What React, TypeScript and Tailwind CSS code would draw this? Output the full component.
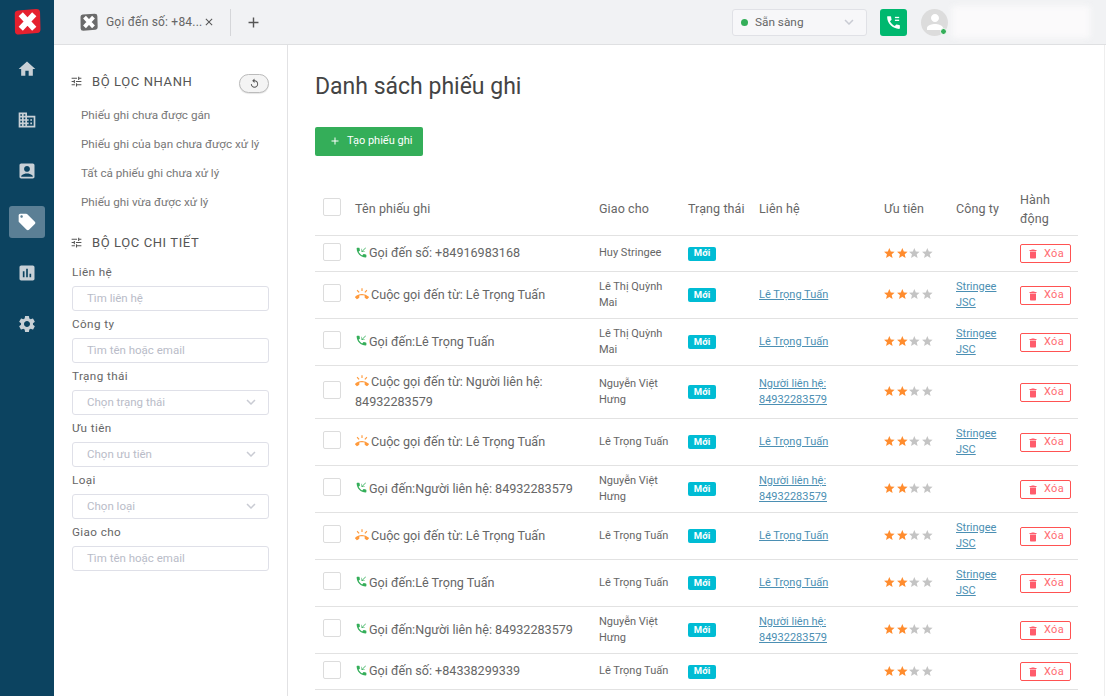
import React from "react";
import {
  MdHome,
  MdBusiness,
  MdAccountBox,
  MdLocalOffer,
  MdAssessment,
  MdSettings,
  MdTune,
  MdReplay,
  MdDelete,
  MdStar,
  MdPhoneCallback,
  MdRingVolume,
  MdPerson,
  MdClose,
  MdAdd,
  MdKeyboardArrowDown,
} from "react-icons/md";

type Row = {
  kind: "in" | "ring";
  title: string;
  owner: string;
  contact?: string;
  company?: boolean;
  h: string;
};

const rows: Row[] = [
  { kind: "in", title: "Gọi đến số: +84916983168", owner: "Huy Stringee", h: "h-[36px]" },
  { kind: "ring", title: "Cuộc gọi đến từ: Lê Trọng Tuấn", owner: "Lê Thị Quỳnh Mai", contact: "Lê Trọng Tuấn", company: true, h: "h-[47px]" },
  { kind: "in", title: "Gọi đến:Lê Trọng Tuấn", owner: "Lê Thị Quỳnh Mai", contact: "Lê Trọng Tuấn", company: true, h: "h-[47px]" },
  { kind: "ring", title: "Cuộc gọi đến từ: Người liên hệ: 84932283579", owner: "Nguyễn Việt Hưng", contact: "Người liên hệ: 84932283579", h: "h-[53px]" },
  { kind: "ring", title: "Cuộc gọi đến từ: Lê Trọng Tuấn", owner: "Lê Trọng Tuấn", contact: "Lê Trọng Tuấn", company: true, h: "h-[47px]" },
  { kind: "in", title: "Gọi đến:Người liên hệ: 84932283579", owner: "Nguyễn Việt Hưng", contact: "Người liên hệ: 84932283579", h: "h-[47px]" },
  { kind: "ring", title: "Cuộc gọi đến từ: Lê Trọng Tuấn", owner: "Lê Trọng Tuấn", contact: "Lê Trọng Tuấn", company: true, h: "h-[47px]" },
  { kind: "in", title: "Gọi đến:Lê Trọng Tuấn", owner: "Lê Trọng Tuấn", contact: "Lê Trọng Tuấn", company: true, h: "h-[47px]" },
  { kind: "in", title: "Gọi đến:Người liên hệ: 84932283579", owner: "Nguyễn Việt Hưng", contact: "Người liên hệ: 84932283579", h: "h-[47px]" },
  { kind: "in", title: "Gọi đến số: +84338299339", owner: "Lê Trọng Tuấn", h: "h-[36px]" },
];

const Logo = ({ className, fill }: { className: string; fill: string }) => (
  <svg viewBox="0 0 28 28" className={className}>
    <path d="M4 2.5 L23 1 Q27 1 27 4.5 L27.5 22 Q27.5 25.5 24 26 L5 27.5 Q1 27.5 1 24 L0.8 6 Q0.8 3 4 2.5 Z" fill={fill} />
    <path d="M7 6.5 L21 21.5 M21 6.5 L7 21.5" stroke="#fff" strokeWidth="6" fill="none" />
  </svg>
);

const Checkbox = () => <div className="w-[18px] h-[18px] rounded-[2px] border border-[#dcdcdc] bg-white" />;

const Field = ({ label, placeholder, select }: { label: string; placeholder: string; select?: boolean }) => (
  <div className="flex flex-col">
    <label className="h-[21px] text-[11.7px] leading-[14px] tracking-[0.4px] text-[#666]">{label}</label>
    <div className="h-[25px] w-[197px] flex items-center justify-between pl-[14px] pr-[8px] border border-[#dfe0e8] rounded-[3px] bg-white">
      <span className="pt-[1px] text-[11.5px] text-[#b9bcc8]">{placeholder}</span>
      {select && <MdKeyboardArrowDown className="w-[18px] h-[18px] text-[#c9cbd3]" />}
    </div>
  </div>
);

const FilterHead = ({ text }: { text: string }) => (
  <div className="flex items-center gap-[9px]">
    <MdTune className="-ml-[2px] w-[13px] h-[13px] text-[#555]" />
    <span className="text-[13px] tracking-[0.6px] text-[#555]">{text}</span>
  </div>
);

const Stars = () => (
  <div className="flex -ml-[1px]">
    {[0, 1, 2, 3].map((i) => (
      <MdStar key={i} className={`w-[12.67px] h-[12.67px] ${i < 2 ? "text-[#ff8c2e]" : "text-[#c4c4c4]"}`} />
    ))}
  </div>
);

const navIcons = [MdHome, MdBusiness, MdAccountBox, MdLocalOffer, MdAssessment, MdSettings];

export default function App() {
  return (
    <div className="h-screen w-screen flex overflow-hidden bg-white font-['Roboto',sans-serif] text-[#666]">
      <aside className="w-[54px] shrink-0 bg-[#0c4360] flex flex-col items-center">
        <div className="h-[53px] pt-[8px]">
          <Logo className="w-[27px] h-[27px]" fill="#e5202e" />
        </div>
        <nav className="flex flex-col items-center">
          {navIcons.map((Icon, i) => (
            <div key={i} className={`w-[36px] h-[32px] mb-[19px] flex items-center justify-center rounded-[3px] ${i === 3 ? "bg-[#5b7f95]" : ""}`}>
              <Icon className={`w-[20px] h-[20px] ${i === 3 ? "text-white" : "text-[#c8d0d6]"}`} />
            </div>
          ))}
        </nav>
      </aside>

      <div className="flex-1 flex flex-col min-w-0">
        <header className="h-[45px] shrink-0 bg-[#f1f2f4] border-b border-[#dfe0e2] flex items-center">
          <div className="ml-[26px] w-[150px] flex items-center">
            <Logo className="w-[18px] h-[18px]" fill="#6b6b6b" />
            <span className="ml-[8px] text-[12px] tracking-[0.2px] text-[#666] whitespace-nowrap">Gọi đến số: +84...</span>
            <MdClose className="ml-[1px] w-[12px] h-[12px] shrink-0 text-[#555]" />
          </div>
          <div className="w-px h-[27px] bg-[#d5d6d9]" />
          <MdAdd className="ml-[14px] w-[17px] h-[17px] text-[#555]" />

          <div className="ml-[470px] w-[135px] h-[27px] flex items-center justify-between pl-[8px] pr-[8px] border border-[#e0e1e6] rounded-[3px] bg-[#f7f7f9]">
            <div className="flex items-center gap-[7px]">
              <span className="w-[7px] h-[7px] rounded-full bg-[#34ae59]" />
              <span className="pt-[1px] text-[11.8px] text-[#666]">Sẵn sàng</span>
            </div>
            <MdKeyboardArrowDown className="w-[18px] h-[18px] text-[#c9cbd3]" />
          </div>

          <div className="ml-[13px] w-[27px] h-[27px] rounded-[3px] bg-[#00b86f] flex items-center justify-center">
            <svg viewBox="0 0 24 24" className="w-[17px] h-[17px]" fill="#fff">
              <path d="M20.01 15.38c-1.23 0-2.42-.2-3.53-.56a.977.977 0 0 0-1.01.24l-1.57 1.97c-2.83-1.35-5.48-3.9-6.89-6.83l1.95-1.66c.27-.28.35-.67.24-1.02-.37-1.11-.56-2.3-.56-3.53 0-.54-.45-.99-.99-.99H4.19C3.65 3 3 3.24 3 3.99 3 13.28 10.73 21 20.01 21c.71 0 .99-.63.99-1.18v-3.45c0-.54-.45-.99-.99-.99z" />
              <rect x="14" y="4" width="6" height="1.8" />
              <rect x="14" y="8" width="6" height="1.8" />
            </svg>
          </div>

          <div className="ml-[14px] relative w-[27px] h-[27px] rounded-full bg-[#dcdcdc] flex items-center justify-center">
            <MdPerson className="w-[24px] h-[24px] text-white" />
            <span className="absolute right-[1px] bottom-[1px] w-[5px] h-[5px] rounded-full bg-[#34ae59] border border-white box-content" />
          </div>
          <div className="ml-[4px] w-[138px] h-[32px] bg-[#fbfafb] blur-[3px]" />
        </header>

        <div className="flex-1 flex min-h-0">
          <section className="w-[234px] shrink-0 border-r border-[#e2e2e4] pl-[18px] pr-[18px] pt-[27px]">
            <div className="flex items-center justify-between h-[19px] mt-[2px] -mb-[2px]">
              <div className="-mt-[4px]">
                <FilterHead text="BỘ LỌC NHANH" />
              </div>
              <div className="w-[30px] h-[19px] rounded-full border border-[#bbb] bg-[#f4f4f4] shadow-[0_1px_1px_rgba(0,0,0,0.1)] flex items-center justify-center">
                <MdReplay className="w-[11px] h-[11px] text-[#555]" />
              </div>
            </div>
            <ul className="mt-[15px] pl-[9px] flex flex-col gap-[11px] text-[11.7px] leading-[18px] text-[#777]">
              <li>Phiếu ghi chưa được gán</li>
              <li>Phiếu ghi của bạn chưa được xử lý</li>
              <li>Tất cả phiếu ghi chưa xử lý</li>
              <li>Phiếu ghi vừa được xử lý</li>
            </ul>
            <div className="mt-[22px] mb-[12px]">
              <FilterHead text="BỘ LỌC CHI TIẾT" />
            </div>
            <div className="flex flex-col gap-[6px]">
              <Field label="Liên hệ" placeholder="Tìm liên hệ" />
              <Field label="Công ty" placeholder="Tìm tên hoặc email" />
              <Field label="Trạng thái" placeholder="Chọn trạng thái" select />
              <Field label="Ưu tiên" placeholder="Chọn ưu tiên" select />
              <Field label="Loại" placeholder="Chọn loại" select />
              <Field label="Giao cho" placeholder="Tìm tên hoặc email" />
            </div>
          </section>

          <main className="flex-1 min-w-0 pl-[27px] pr-[26px] mr-[1px] border-r border-[#eeeeee]">
            <h1 className="mt-[26px] text-[23px] leading-[32px] font-normal text-[#444]">Danh sách phiếu ghi</h1>
            <button className="mt-[24px] w-[108px] h-[29px] pb-[1px] pl-[14px] rounded-[2px] bg-[#34ae59] text-white text-[11px] flex items-center justify-start gap-[6px]">
              <MdAdd className="w-[12px] h-[12px]" />
              Tạo phiếu ghi
            </button>

            <table className="mt-[31px] w-[763px] table-fixed border-collapse">
              <colgroup>
                <col className="w-[32px]" />
                <col className="w-[244px]" />
                <col className="w-[89px]" />
                <col className="w-[71px]" />
                <col className="w-[125px]" />
                <col className="w-[72px]" />
                <col className="w-[64px]" />
                <col className="w-[66px]" />
              </colgroup>
              <thead>
                <tr className="h-[48px] border-b border-[#e2e2e2] text-[12.5px] leading-[19px] tracking-[0.1px] text-[#666] text-left">
                  <th className="pl-[8px] pb-[8px] font-normal"><Checkbox /></th>
                  <th className="pl-[8px] pb-[4px] font-normal">Tên phiếu ghi</th>
                  <th className="pl-[8px] pb-[4px] font-normal">Giao cho</th>
                  <th className="pl-[8px] pb-[4px] font-normal">Trạng thái</th>
                  <th className="pl-[8px] pb-[4px] font-normal">Liên hệ</th>
                  <th className="pl-[8px] pb-[4px] font-normal">Ưu tiên</th>
                  <th className="pl-[8px] pb-[4px] font-normal">Công ty</th>
                  <th className="pl-[8px] pb-[4px] font-normal">Hành động</th>
                </tr>
              </thead>
              <tbody>
                {rows.map((r, i) => (
                  <tr key={i} className={`${r.h} border-b border-[#e2e2e2]`}>
                    <td className="pl-[8px] pb-[3px]"><Checkbox /></td>
                    <td className="pl-[8px] text-[12.6px] leading-[19.5px] text-[#666]">
                      {r.kind === "in" ? (
                        <MdPhoneCallback className="inline w-[13px] h-[13px] mr-[1px] mb-[3px] text-[#34ae59]" />
                      ) : (
                        <MdRingVolume className="inline w-[14px] h-[14px] mr-[2px] mb-[3px] text-[#ff9a3c]" />
                      )}
                      {r.title}
                    </td>
                    <td className="pl-[8px] pr-[10px] text-[11px] leading-[16px] text-[#666]">{r.owner}</td>
                    <td className="pl-[8px] pt-[1px]">
                      <span className="flex items-center justify-center w-[28px] h-[14px] rounded-[2px] bg-[#00bcd4] text-white text-[9.5px] font-bold">Mới</span>
                    </td>
                    <td className="pl-[8px] pr-[30px] text-[11px] leading-[16px] text-[#4b8fb3] underline">{r.contact}</td>
                    <td className="pl-[8px]"><Stars /></td>
                    <td className="pl-[8px] pr-[10px] text-[11px] leading-[16px] text-[#4b8fb3] underline">{r.company ? "Stringee JSC" : ""}</td>
                    <td className="pl-[8px] pt-[1px]">
                      <button className="w-[51px] h-[19px] rounded-[2px] border border-[#ff5252] flex items-center justify-center gap-[5px] pt-[1px] text-[11px] tracking-[0.3px] text-[#ff6b72]">
                        <MdDelete className="w-[12px] h-[12px] text-[#ff5c6c]" />
                        Xóa
                      </button>
                    </td>
                  </tr>
                ))}
              </tbody>
            </table>
          </main>
        </div>
      </div>
    </div>
  );
}
